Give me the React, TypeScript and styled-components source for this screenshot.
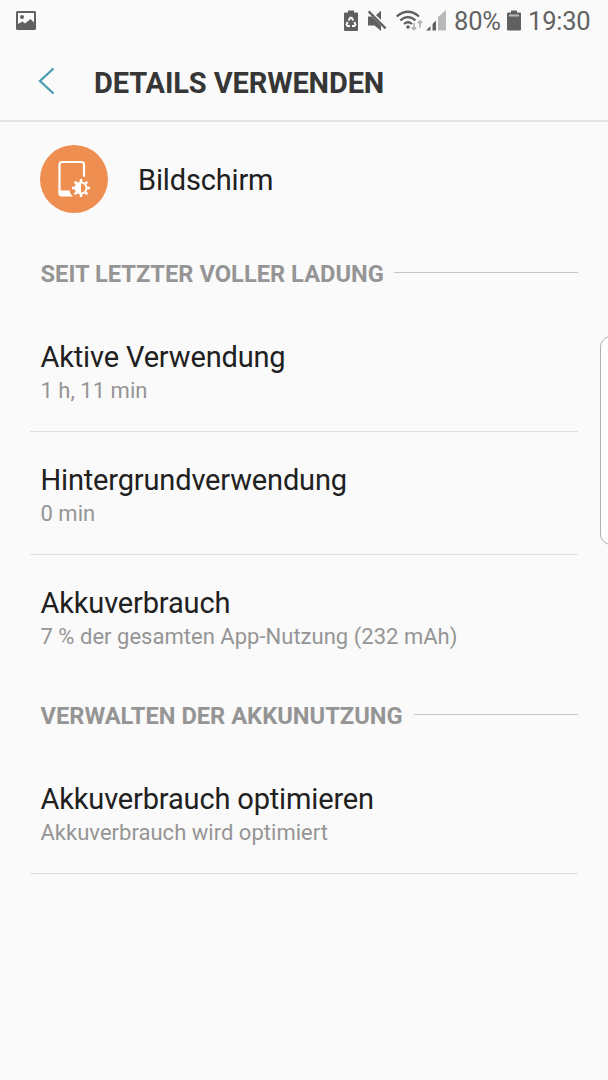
import React from 'react';
import styled, { createGlobalStyle } from 'styled-components';

const GlobalStyle = createGlobalStyle`
  * { box-sizing: border-box; }
  body { margin: 0; background: #fafafa; font-family: Roboto, sans-serif; overflow: hidden; }
`;

const Screen = styled.main`
  position: relative;
  width: 608px;
  height: 1080px;
  display: flex;
  flex-direction: column;
  background: #fafafa;
  overflow: hidden;
`;

const StatusBar = styled.div`
  height: 42px;
  flex: none;
  display: flex;
  align-items: center;
  justify-content: space-between;
  padding: 0 18px 0 15px;
  color: #626262;
`;

const StatusGroup = styled.div`
  display: flex;
  align-items: center;
`;

const StatusIcon = styled.svg<{ $gap?: number }>`
  display: block;
  flex: none;
  margin-right: ${(p) => p.$gap ?? 0}px;
`;

const StatusText = styled.span<{ $width: number }>`
  width: ${(p) => p.$width}px;
  font-size: 25.5px;
  line-height: 42px;
  letter-spacing: -0.2px;
  white-space: nowrap;
`;

const Header = styled.header`
  height: 80px;
  flex: none;
  display: flex;
  align-items: center;
  padding-left: 36px;
  border-bottom: 2px solid #e4e4e4;
`;

const BackButton = styled.button`
  width: 58px;
  height: 32px;
  padding: 0;
  border: 0;
  background: none;
`;

const Title = styled.h1`
  margin: 0;
  padding-top: 3px;
  font-size: 29px;
  line-height: 40px;
  font-weight: 700;
  letter-spacing: -0.12px;
  color: #363636;
  white-space: nowrap;
`;

const Profile = styled.section`
  height: 114px;
  flex: none;
  display: flex;
  align-items: center;
  gap: 30px;
  padding-left: 40px;
`;

const SectionHeader = styled.div`
  height: 73px;
  flex: none;
  display: flex;
  align-items: center;
  padding: 3px 30px 0 40.5px;

  &::after {
    content: '';
    flex: 1;
    height: 1px;
    margin-bottom: 3px;
    background: #c6c6c6;
  }
`;

const SectionTitle = styled.h2<{ $width: number }>`
  margin: 0;
  width: ${(p) => p.$width}px;
  font-size: 23.7px;
  line-height: 30px;
  font-weight: 700;
  color: #959595;
  white-space: nowrap;
`;

const Row = styled.div<{ $last?: boolean }>`
  height: 123px;
  flex: none;
  margin: 0 30px;
  padding: 31px 0 0 10.5px;
  border-bottom: 1px solid ${(p) => (p.$last ? 'transparent' : '#e0e0e0')};
`;

const Label = styled.div`
  font-size: 29px;
  line-height: 34px;
  letter-spacing: -0.16px;
  color: #202020;
  white-space: nowrap;
`;

const ProfileName = styled(Label)`
  padding-top: 2px;
`;

const Detail = styled.div`
  font-size: 22px;
  line-height: 34px;
  letter-spacing: 0.02px;
  color: #959595;
  white-space: nowrap;
`;

const EdgeHandle = styled.div`
  position: absolute;
  top: 336px;
  left: 600px;
  width: 24px;
  height: 209px;
  border: 1px solid #b0b0b0;
  border-radius: 11px;
  background: #fefefe;
`;

export default function App() {
  return (
    <>
      <GlobalStyle />
      <Screen>
        <StatusBar>
          <StatusIcon width="22" height="20" viewBox="0 0 22 20">
            <path fill="#606060" fillRule="evenodd" d="M2.500 0H19.500Q21 0 21 1.500V17.500Q21 19 19.500 19H2.500Q1 19 1 17.500V1.500Q1 0 2.500 0ZM3 2V13L7.500 10.500L10 12.500L15.500 8L19 11.500V2Z" />
            <circle cx="7" cy="6" r="2" fill="#606060" />
          </StatusIcon>
          <StatusGroup>
            <StatusIcon width="14" height="22" viewBox="0 0 14 22" $gap={9}>
              <path fill="#606060" d="M4 .5H10V2.500H13Q14 2.500 14 3.500V20Q14 21 13 21H1Q0 21 0 20V3.500Q0 2.500 1 2.500H4Z" />
              <g fill="none" stroke="#fafafa" strokeWidth="1.900">
                <path d="M4.600 10.500L6.300 7.700H7.700L9.300 10.400" />
                <path d="M10.300 12L11.500 14.500L10.500 16H8" />
                <path d="M6 16H3.500L2.500 14.500L3.700 12" />
              </g>
            </StatusIcon>
            <StatusIcon width="20" height="22" viewBox="0 0 20 22" $gap={8}>
              <path fill="#606060" d="M1 6.500H5L14 15.500V21L7.500 15.500H1Z" />
              <path fill="#606060" d="M9 5L14 .8V10Z" />
              <path d="M1.600 1.400L18.600 18.400" stroke="#606060" strokeWidth="2.200" />
            </StatusIcon>
            <StatusIcon width="31" height="22" viewBox="0 0 31 22" $gap={0}>
              <g fill="none" stroke="#606060" strokeWidth="2.200">
                <path d="M1.700 6.500Q13 -3 24 6.500" />
                <path d="M5.300 10.300Q13 3.700 20.500 10.300" />
                <path d="M9 14Q13 10.500 17 14" />
              </g>
              <circle cx="13" cy="17" r="1.800" fill="#606060" />
              <g fill="none" stroke="#b4b4b4" strokeWidth="1.700">
                <path d="M19 13V19.500M16.800 17.300L19 19.500L21.200 17.300" />
                <path d="M25 17.500V11M22.800 13.200L25 11L27.200 13.200" />
              </g>
            </StatusIcon>
            <StatusIcon width="20" height="22" viewBox="0 0 20 22" $gap={8}>
              <path fill="#b9b9b9" d="M12 7L20 0V20.500H12Z" />
              <path fill="#606060" d="M0 20.500L4.500 16V20.500ZM6.500 14L10 10.500V20.500H6.500Z" />
            </StatusIcon>
            <StatusText $width={53}>80%</StatusText>
            <StatusIcon width="14" height="22" viewBox="0 0 14 22" $gap={7}>
              <path fill="#606060" d="M4 .5H10V2.500H13Q14 2.500 14 3.500V19.500Q14 20.500 13 20.500H1Q0 20.500 0 19.500V3.500Q0 2.500 1 2.500H4Z" />
              <path fill="#bababa" d="M2 4.500H12V6.500H2Z" />
            </StatusIcon>
            <StatusText $width={62}>19:30</StatusText>
          </StatusGroup>
        </StatusBar>

        <Header>
          <BackButton aria-label="Zurück">
            <StatusIcon width="20" height="30" viewBox="0 0 20 30">
              <path d="M17.500 2.500L4 15L17.500 27.500" fill="none" stroke="#4a9bae" strokeWidth="2.300" />
            </StatusIcon>
          </BackButton>
          <Title>DETAILS VERWENDEN</Title>
        </Header>

        <Profile>
          <svg width="68" height="68" viewBox="0 0 68 68">
            <circle cx="34" cy="34" r="34" fill="#ee8e50" />
            <path d="M44 31.700V19.500Q44 17 41.500 17H22Q19.500 17 19.500 19.500V48" fill="none" stroke="#fff" strokeWidth="2.200" />
            <path d="M18.400 45.500H29.500Q30 49.500 33 51.500H21.500Q18.400 51.500 18.400 48.500Z" fill="#fff" />
            <g transform="translate(41 43)">
              <g stroke="#fff" strokeWidth="2.500">
                <path d="M0 -9V-5M0 9V5M-9 0H-5M9 0H5M-6.300 -6.300L-4 -4M6.300 6.300L4 4M-6.300 6.300L-4 4M6.300 -6.300L4 -4" />
              </g>
              <circle r="5.500" fill="#ee8e50" stroke="#fff" strokeWidth="1.900" />
              <path d="M0 -5.500A5.500 5.500 0 0 0 0 5.500Z" fill="#fff" />
            </g>
          </svg>
          <ProfileName>Bildschirm</ProfileName>
        </Profile>

        <SectionHeader>
          <SectionTitle $width={353.5}>SEIT LETZTER VOLLER LADUNG</SectionTitle>
        </SectionHeader>
        <Row>
          <Label>Aktive Verwendung</Label>
          <Detail>1 h, 11 min</Detail>
        </Row>
        <Row>
          <Label>Hintergrundverwendung</Label>
          <Detail>0 min</Detail>
        </Row>
        <Row $last>
          <Label>Akkuverbrauch</Label>
          <Detail>7 % der gesamten App-Nutzung (232 mAh)</Detail>
        </Row>
        <SectionHeader>
          <SectionTitle $width={373.5}>VERWALTEN DER AKKUNUTZUNG</SectionTitle>
        </SectionHeader>
        <Row>
          <Label>Akkuverbrauch optimieren</Label>
          <Detail>Akkuverbrauch wird optimiert</Detail>
        </Row>
        <EdgeHandle />
      </Screen>
    </>
  );
}
